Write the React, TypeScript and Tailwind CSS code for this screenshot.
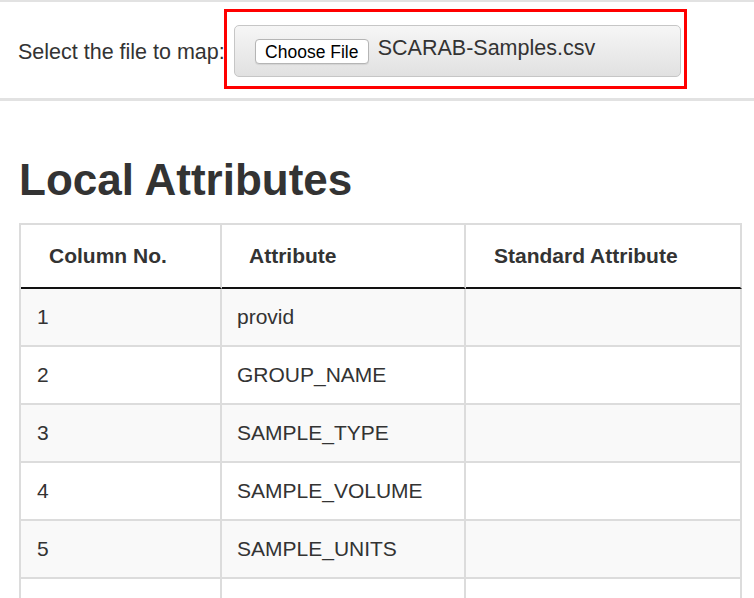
const rows = [
  { no: "1", attr: "provid" },
  { no: "2", attr: "GROUP_NAME" },
  { no: "3", attr: "SAMPLE_TYPE" },
  { no: "4", attr: "SAMPLE_VOLUME" },
  { no: "5", attr: "SAMPLE_UNITS" },
  { no: "", attr: "" },
];

export default function App() {
  return (
    <div className="min-h-screen bg-white text-[#333] font-['Liberation_Sans',Arial,sans-serif]">
      {/* file picker strip */}
      <div className="flex items-start px-[18px] h-[101px] border-t-2 border-b-[3px] border-[#e2e2e2]">
        <label className="mt-[38px] shrink-0 whitespace-nowrap text-[21.5px] leading-[24px]">
          Select the file to map:
        </label>
        <div className="mt-[7px] ml-[-1px] w-[463px] h-[80px] border-[3px] border-[#ff0000] pl-[7px] pt-[13px] relative bg-white">
          <div className="flex items-start w-[447px] h-[52px] rounded-[5px] border border-[#c6c6c6] bg-linear-to-b from-[#f6f6f6] to-[#e1e1e1] pl-[20px]">
            <button className="mt-[13px] h-[25px] w-[114px] rounded-[4px] border border-[#b5b5b5] bg-white pt-[1px] text-[17.5px] leading-[22px] text-black shadow-[0_1px_1px_rgba(0,0,0,0.08)]">
              Choose File
            </button>
            <span className="ml-[9px] mt-[10px] text-[21.5px] leading-[24px] text-[#333]">
              SCARAB-Samples.csv
            </span>
          </div>
        </div>
      </div>

      <div className="px-[19px]">
        <h1 className="mt-[57px] text-[44px] leading-[44px] font-bold text-[#333]">Local Attributes</h1>

        <table className="mt-[21px] w-[723px] border-separate border-spacing-0 border-l-2 border-t-2 border-[#dcdcdc] text-[21px]">
          <thead>
            <tr>
              <th className="w-[201px] h-[64px] border-r-2 border-b-2 border-r-[#dcdcdc] border-b-[#111] pl-[28px] text-left font-bold">
                Column No.
              </th>
              <th className="w-[244px] h-[64px] border-r-2 border-b-2 border-r-[#dcdcdc] border-b-[#111] pl-[27px] text-left font-bold">
                Attribute
              </th>
              <th className="h-[64px] border-r-2 border-b-2 border-r-[#dcdcdc] border-b-[#111] pl-[28px] text-left font-bold">
                Standard Attribute
              </th>
            </tr>
          </thead>
          <tbody>
            {rows.map((r, i) => (
              <tr key={i} className={i % 2 === 0 ? "bg-[#f9f9f9]" : "bg-white"}>
                <td className="h-[58px] border-r-2 border-b-2 border-[#dcdcdc] pl-[16px]">{r.no}</td>
                <td className="h-[58px] border-r-2 border-b-2 border-[#dcdcdc] pl-[15px]">{r.attr}</td>
                <td className="h-[58px] border-r-2 border-b-2 border-[#dcdcdc]"></td>
              </tr>
            ))}
          </tbody>
        </table>
      </div>
    </div>
  );
}
